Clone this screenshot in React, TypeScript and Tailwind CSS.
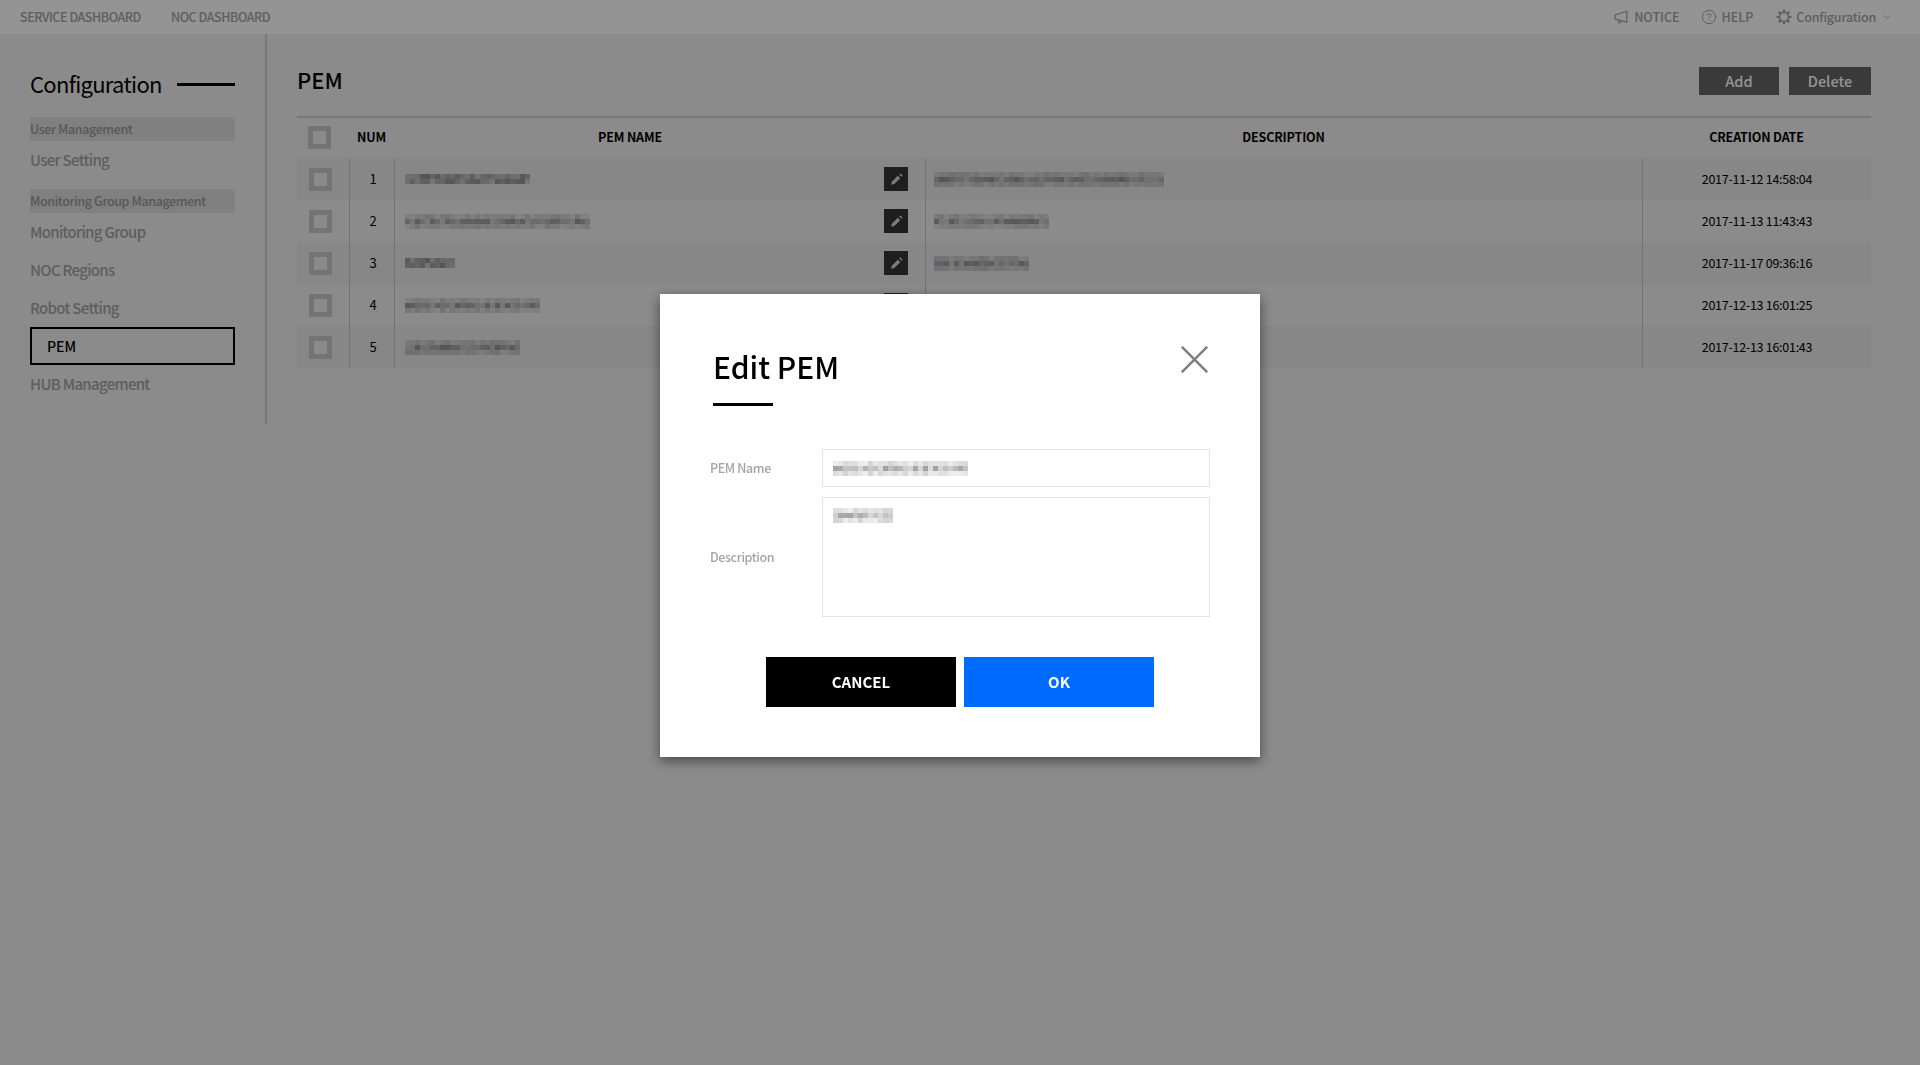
import { ChevronDown, CircleHelp } from "lucide-react";

const font = { fontFamily: '"Noto Sans CJK KR", "Noto Sans", sans-serif' };

const rows = [
  { num: 1, name: 125, nameRows: 2, desc: 230, date: "2017-11-12 14:58:04", edit: true },
  { num: 2, name: 185, nameRows: 3, desc: 115, date: "2017-11-13 11:43:43", edit: true },
  { num: 3, name: 50, nameRows: 2, desc: 95, date: "2017-11-17 09:36:16", edit: true },
  { num: 4, name: 135, nameRows: 3, desc: 0, date: "2017-12-13 16:01:25", edit: true },
  { num: 5, name: 115, nameRows: 3, desc: 0, date: "2017-12-13 16:01:43", edit: true },
];

// the blurred-out values in the picture are a 5px mosaic
function Mosaic({ width, lines = 3, seed, light = false }: { width: number; lines?: number; seed: number; light?: boolean }) {
  const cells = [];
  let r = seed * 7919 + 13;
  for (let y = 0; y < lines; y++) {
    for (let x = 0; x < Math.round(width / 5); x++) {
      r = (r * 1103515245 + 12345) & 0x7fffffff;
      const v = (r >> 8) % 100;
      const mid = lines === 2 || y === 1;
      const o = mid ? 0.16 + v / 300 : 0.08 + v / 700;
      cells.push(<rect key={`${x}-${y}`} x={x * 5} y={y * 5} width={5} height={5} fill={v % 9 === 0 && !light ? "#30405a" : "#3a3636"} opacity={o} />);
    }
  }
  return (
    <svg width={width} height={lines * 5} className="block shrink-0">
      {cells}
    </svg>
  );
}

function Box() {
  return <div className="h-[23px] w-[23px] border-[5px] border-[#c8c8c8] bg-[#eeeeee]" />;
}

function Sidebar() {
  const item = "flex h-[38px] items-center text-[15px] font-medium tracking-[-0.7px] text-[#a2a2a2]";
  const group = "flex h-[24px] items-center bg-[#dcdcdc] text-[12.5px] font-medium tracking-[-0.4px] text-[#989898]";
  return (
    <aside className="h-[391px] w-[267px] shrink-0 border-r-2 border-[#cfcfcf] pl-[30px] pr-[30px] pt-[35px]">
      <div className="flex h-[30px] items-center justify-between">
        <span className="pb-[2px] text-[22px] tracking-[-0.7px] text-black">Configuration</span>
        <span className="h-[3px] w-[58px] bg-black" />
      </div>
      <div className={`mt-[18px] ${group}`}>User Management</div>
      <div className={item}>User Setting</div>
      <div className={`mt-[10px] ${group}`}>Monitoring Group Management</div>
      <div className={`mt-px pb-[2px] ${item}`}>Monitoring Group</div>
      <div className={`pb-[2px] ${item}`}>NOC Regions</div>
      <div className={`pb-[2px] ${item}`}>Robot Setting</div>
      <div className="-mt-px flex h-[38px] items-center border-2 border-black pl-[15px] text-[14px] font-medium text-black">PEM</div>
      <div className={`mt-px pb-[2px] ${item}`}>HUB Management</div>
    </aside>
  );
}

function PemTable() {
  return (
    <div>
      <div className="flex h-[40px] items-center pb-[2px] text-[12.5px] font-bold tracking-[-0.15px] text-black">
        <div className="w-[52px] pl-[11px]">
          <Box />
        </div>
        <div className="w-[45px] text-center">NUM</div>
        <div className="w-[472px] text-center">PEM NAME</div>
        <div className="w-[59px]" />
        <div className="w-[717px] text-center">DESCRIPTION</div>
        <div className="w-[229px] text-center">CREATION DATE</div>
      </div>
      {rows.map((row) => (
        <div key={row.num} className={`flex h-[42px] items-stretch text-[13px] text-black ${row.num % 2 === 1 ? "bg-[#e8e8e8]" : ""}`}>
          <div className="flex w-[53px] items-center border-r border-[#c4c4c4] pl-[12px]">
            <Box />
          </div>
          <div className="flex w-[45px] items-center justify-center border-r border-[#c4c4c4] pl-[2px]">{row.num}</div>
          <div className="flex w-[472px] items-center pl-[10px]">
            <Mosaic width={row.name} lines={row.nameRows} seed={row.num} />
          </div>
          <div className="flex w-[59px] items-center justify-center border-r border-[#c4c4c4]">
            {row.edit && (
              <button className="flex h-[24px] w-[24px] items-center justify-center bg-[#353535]">
                <svg width="13" height="13" viewBox="0 0 11 11" className="block">
                  <path d="M1 10L1.6 7.4L6.6 2.4L8.6 4.4L3.6 9.4Z" fill="#d8d8d8" />
                  <path d="M7.8 1.2L8.8 0.4L10.6 2.2L9.8 3.2Z" fill="#d8d8d8" />
                </svg>
              </button>
            )}
          </div>
          <div className="flex w-[717px] items-center border-r border-[#c4c4c4] pl-[8px]">
            {row.desc > 0 && <Mosaic width={row.desc} seed={row.num + 10} />}
          </div>
          <div className="flex w-[228px] items-center justify-center text-[12.5px] tracking-[-0.27px]">{row.date}</div>
        </div>
      ))}
    </div>
  );
}

function EditDialog() {
  const label = "w-[112px] text-[12.5px] font-medium tracking-[-0.4px] text-[#a4a4a4]";
  return (
    <div className="fixed inset-0 flex items-start justify-center bg-black/[0.42] pt-[294px]">
      <div className="relative h-[463px] w-[600px] bg-white px-[50px] pt-[50px] shadow-[0_4px_12px_rgba(0,0,0,0.5)]">
        <button className="absolute right-[52px] top-[52px] text-[#808080]">
          <svg width="27" height="27" viewBox="0 0 27 27" stroke="currentColor" strokeWidth="2.6" className="block">
            <path d="M0.8 0.8L26.2 26.2M26.2 0.8L0.8 26.2" />
          </svg>
        </button>
        <h2 className="ml-[3px] text-[30px] font-medium leading-[44px] text-black">Edit PEM</h2>
        <div className="ml-[3px] mt-[15px] h-[3px] w-[60px] bg-black" />
        <div className="mt-[43px] flex h-[38px] items-center">
          <label className={label}>PEM Name</label>
          <div className="flex h-full w-[388px] items-center border border-[#e5e5e5] pl-[10px]">
            <Mosaic width={135} seed={4} light />
          </div>
        </div>
        <div className="mt-[10px] flex h-[120px] items-center">
          <label className={label}>Description</label>
          <div className="h-full w-[388px] border border-[#e5e5e5] pl-[10px] pt-[10px]">
            <Mosaic width={60} seed={9} light />
          </div>
        </div>
        <div className="mt-[40px] flex justify-center gap-[8px]">
          <button className="h-[50px] w-[190px] bg-black text-[15px] font-bold text-white">CANCEL</button>
          <button className="h-[50px] w-[190px] bg-[#006cff] text-[15px] font-bold text-white">OK</button>
        </div>
      </div>
    </div>
  );
}

export default function App() {
  return (
    <div className="min-h-[1065px] bg-[#f0f0f0]" style={font}>
      <header className="flex h-[34px] items-center justify-between bg-white pl-[20px] pr-[27px] text-[12.5px] font-medium text-[#a2a2a2]">
        <nav className="flex gap-[30px] tracking-[-0.45px]">
          <span>SERVICE DASHBOARD</span>
          <span>NOC DASHBOARD</span>
        </nav>
        <div className="flex items-center">
          <svg width="14" height="14" viewBox="0 0 14 14" fill="none" stroke="currentColor" strokeWidth="1.2" className="block">
            <path d="M12.8 1.2L1.2 5V9L12.8 12.2Z" />
            <path d="M4 10L5 12.8L8 12" />
          </svg>
          <span className="ml-[6px]">NOTICE</span>
          <CircleHelp size={16} strokeWidth={1.5} className="ml-[21px]" />
          <span className="ml-[5px]">HELP</span>
          <svg width="16" height="16" viewBox="0 0 16 16" fill="none" stroke="currentColor" className="ml-[23px] block">
            <circle cx="8" cy="8" r="4.6" strokeWidth="1.7" />
            <path strokeWidth="2.2" d="M8 .5V3M8 13v2.5M.5 8H3M13 8h2.5M2.7 2.7l1.8 1.8M11.5 11.5l1.8 1.8M13.3 2.7l-1.8 1.8M4.5 11.5l-1.8 1.8" />
          </svg>
          <span className="ml-[4px] tracking-[-0.2px]">Configuration</span>
          <ChevronDown size={12} strokeWidth={1.5} className="ml-[5px]" />
        </div>
      </header>
      <div className="flex">
        <Sidebar />
        <main className="flex-1 pl-[30px] pr-[49px]">
          <div className="flex h-[84px] items-end justify-between border-b-2 border-[#cfcfcf] pb-[21px]">
            <h1 className="pb-px text-[22px] font-medium leading-[30px] text-black">PEM</h1>
            <div className="flex gap-[10px]">
              <button className="h-[28px] w-[80px] bg-[#646464] text-[14.5px] font-medium text-white">Add</button>
              <button className="h-[28px] w-[82px] bg-[#646464] text-[14.5px] font-medium text-white">Delete</button>
            </div>
          </div>
          <PemTable />
        </main>
      </div>
      <EditDialog />
    </div>
  );
}
